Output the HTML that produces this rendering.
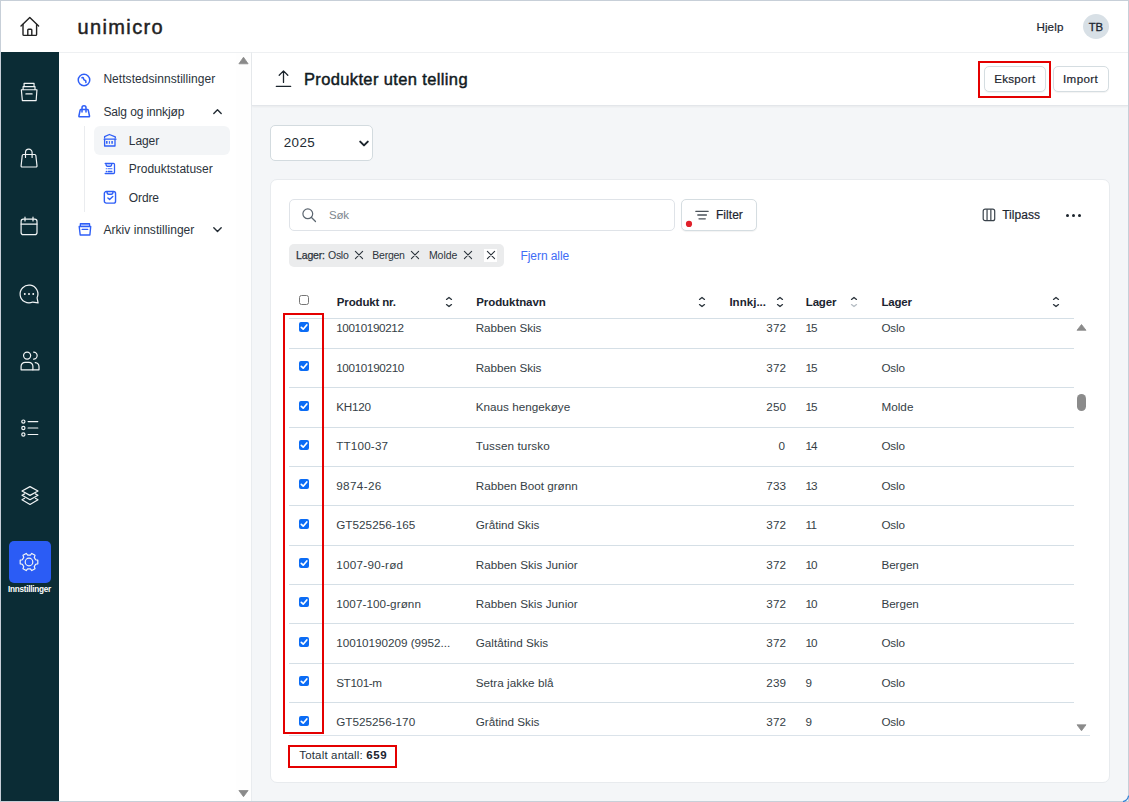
<!DOCTYPE html>
<html lang="nb">
<head>
<meta charset="utf-8">
<title>Produkter uten telling</title>
<style>
*{box-sizing:border-box;margin:0;padding:0}
html,body{width:1129px;height:802px;overflow:hidden;background:#fff}
body{font-family:"Liberation Sans",Arial,sans-serif;color:#1f2a33;font-size:12px;position:relative}
.abs{position:absolute}
#frame{position:absolute;left:0;top:0;width:1129px;height:802px;border:1px solid #c7cfd8;pointer-events:none;z-index:50}
#topbar{position:absolute;left:1px;top:1px;width:1127px;height:51px;background:#fff}
#rail{position:absolute;left:1px;top:52px;width:58px;height:749px;background:#0b2c35}
#side{position:absolute;left:59px;top:52px;width:192px;height:749px;background:#fff;border-top:1px solid #eef0f2}
#sidescroll{position:absolute;left:236px;top:53px;width:15px;height:748px;background:#fefefe}
#main{position:absolute;left:251px;top:52px;width:877px;height:749px;background:#f4f6f8;border-left:1px solid #e9ecef}
#phead{position:absolute;left:252px;top:52px;width:876px;height:54px;background:#fff;border-top:1px solid #eef0f2;border-bottom:1px solid #e3e6ea;box-shadow:0 1px 2px rgba(0,0,0,.05)}
.t{position:absolute;white-space:nowrap;line-height:1}
.ri{position:absolute;width:24px;height:24px;display:block;fill:none;stroke:#f1f4f5;stroke-width:1.2;stroke-linecap:round;stroke-linejoin:round}
.si{position:absolute;display:block;fill:none;stroke:#2f5ff7;stroke-width:1.4;stroke-linecap:round;stroke-linejoin:round}
.btn{position:absolute;background:#fff;border:1px solid #d5dde1;border-radius:5px;box-shadow:0 1px 1px rgba(0,0,0,.05)}
.red{position:absolute;border:2px solid #e40000;z-index:20}
#card{position:absolute;left:269.500px;top:179.400px;width:840.500px;height:603.400px;background:#fff;border:1px solid #e8ebee;border-radius:7px}
.row{position:absolute;left:289px;width:785px;height:1px;background:#d5dfe6}
.cb{position:absolute;left:299px;width:10px;height:10px;border-radius:2px;background:#0b6cf5}
.cb svg{position:absolute;left:0;top:0;width:10px;height:10px;fill:none;stroke:#fff;stroke-width:1.700;stroke-linecap:round;stroke-linejoin:round}
</style>
</head>
<body>
<div id="topbar"></div>
<div id="rail"></div>
<div id="side"></div>
<div id="sidescroll"></div>
<div id="main"></div>
<div id="phead"></div>
<div id="card"></div>

<!-- home icon -->
<svg class="abs" style="left:17.600px;top:15px;width:24px;height:24px" viewBox="0 0 24 24" fill="none" stroke="#222" stroke-width="1.400" stroke-linecap="round" stroke-linejoin="round"><path d="M3 11.100L11.800 2.400L20.600 11.100"/><path d="M5 9.400V19.400a1 1 0 0 0 1 1H17.600a1 1 0 0 0 1-1V9.400"/><path d="M9.800 20.300V15.100a.8.800 0 0 1 .8-.8h2.400a.8.800 0 0 1 .8.800V20.300"/></svg>
<!-- avatar -->
<div class="abs" style="left:1082.800px;top:13.800px;width:26.200px;height:25.200px;border-radius:50%;background:#d8e0e6"></div>

<svg class="ri" style="left:17.2px;top:80.3px" viewBox="0 0 24 24"><path d="M4.35 9.75H19.95L19.15 20.55H5.35Z"/><path d="M6.100 9.600V6.700H18V9.600"/><path d="M7.100 6.600V3.300H17.050V6.600"/><path d="M8.900 13.900H15.100"/></svg>
<svg class="ri" style="left:17.2px;top:146.3px" viewBox="0 0 24 24"><path d="M6.300 8.500H17.800Q18.700 8.500 18.850 9.500L20 19.800Q20.100 21 19 21H5.100Q4 21 4.100 19.800L5.250 9.500Q5.400 8.500 6.300 8.500Z"/><path d="M8.500 11.500V6.400A3.300 3.300 0 0 1 15.100 6.400V11.500"/></svg>
<svg class="ri" style="left:17.2px;top:214.3px" viewBox="0 0 24 24"><rect x="4.100" y="5.100" width="15.900" height="15.500" rx="2.200"/><path d="M4.100 10.100H20M8 3.200V7M16 3.200V7"/></svg>
<svg class="ri" style="left:17.0px;top:281.7px" viewBox="0 0 24 24"><path d="M20.070 15.760A8.900 8.900 0 1 0 15.760 20.070L21.100 20.900Z"/><circle cx="7.800" cy="12" r=".95" fill="#fff" stroke="none"/><circle cx="12" cy="12" r=".95" fill="#fff" stroke="none"/><circle cx="16.250" cy="12" r=".95" fill="#fff" stroke="none"/></svg>
<svg class="ri" style="left:17.5px;top:348.5px" viewBox="0 0 24 24"><circle cx="9.100" cy="6.600" r="3.550"/><path d="M15.600 3.050A3.550 3.550 0 0 1 15.600 10.150"/><path d="M3.100 20.800V17.300A4 4 0 0 1 7.100 13.300H10.900A4 4 0 0 1 14.900 17.300V20.800Z"/><path d="M17.200 13.600A4.200 4.200 0 0 1 21 17.700V20.800H14.900"/></svg>
<svg class="ri" style="left:17.6px;top:415.9px" viewBox="0 0 24 24"><circle cx="5.360" cy="5.600" r="1.600"/><circle cx="5.360" cy="12" r="1.600"/><circle cx="5.360" cy="18.500" r="1.600"/><path d="M10.100 5.600H19.800M10.100 12H19.800M10.100 18.500H19.800"/></svg>
<svg class="ri" style="left:17.8px;top:482.8px" viewBox="0 0 24 24"><path d="M12 3.600L20 8L12 12.400L4 8Z"/><path d="M6.600 10.900L4 12.300L12 16.700L20 12.300L17.400 10.900"/><path d="M6.600 15.300L4 16.700L12 21.400L20 16.700L17.400 15.300"/></svg>
<div class="abs" style="left:9px;top:540.800px;width:42.200px;height:42.100px;border-radius:5px;background:#2b5cf5"></div>
<svg class="ri" style="left:17.2px;top:550.4px" viewBox="0 0 24 24"><circle cx="12" cy="12" r="3.800"/><path d="M18.62 9.72L20.80 10.13L20.80 13.87L18.62 14.28L17.28 16.59L18.02 18.69L14.78 20.56L13.34 18.87L10.66 18.87L9.22 20.56L5.98 18.69L6.72 16.59L5.38 14.28L3.20 13.87L3.20 10.13L5.38 9.72L6.72 7.41L5.98 5.31L9.22 3.44L10.66 5.13L13.34 5.13L14.78 3.44L18.02 5.31L17.28 7.41Z"/></svg>

<!-- side scroll arrows -->
<svg class="abs" style="left:238px;top:56px;width:11px;height:9px" viewBox="0 0 11 9"><path d="M5.500 1.200L10.100 7.800H.9z" fill="#8a8a8a" stroke="#8a8a8a" stroke-width=".8" stroke-linejoin="round"/></svg>
<svg class="abs" style="left:238px;top:789px;width:11px;height:9px" viewBox="0 0 11 9"><path d="M5.500 7.700L10.100 1.500H.9z" fill="#8a8a8a" stroke="#8a8a8a" stroke-width=".8" stroke-linejoin="round"/></svg>

<!-- side menu -->
<div class="abs" style="left:94px;top:126px;width:136px;height:29px;border-radius:6px;background:#f3f5f7"></div>
<div class="abs" style="left:84px;top:126px;width:1px;height:86px;background:#eaecef"></div>
<!-- globe -->
<svg class="si" style="left:77.100px;top:72.900px;width:14px;height:14px;stroke-width:1.500" viewBox="0 0 14 14"><circle cx="7" cy="7" r="5.750"/><path d="M5 4.700Q6.300 4.200 6.500 5.600Q6.700 7 7.900 7.300Q9.200 7.700 8.900 9.400" stroke-width="1.600"/></svg>
<!-- bag -->
<svg class="si" style="left:77.100px;top:104px;width:14px;height:14px;stroke-width:1.500" viewBox="0 0 14 14"><path d="M3.900 5.600H10.500Q11.100 5.600 11.250 6.200L12.500 12Q12.650 12.800 11.900 12.800H2.500Q1.750 12.800 1.900 12L3.150 6.200Q3.300 5.600 3.900 5.600Z"/><path d="M5 8V3.700A2 2 0 0 1 9 3.700V8"/></svg>
<!-- chevrons -->
<svg class="abs" style="left:211.500px;top:106.500px;width:11px;height:9px" viewBox="0 0 11 9" fill="none" stroke="#222b33" stroke-width="1.400" stroke-linecap="round" stroke-linejoin="round"><path d="M1.800 6.500l3.700-3.700 3.700 3.700"/></svg>
<svg class="abs" style="left:211.500px;top:225px;width:11px;height:9px" viewBox="0 0 11 9" fill="none" stroke="#222b33" stroke-width="1.400" stroke-linecap="round" stroke-linejoin="round"><path d="M1.800 2.700l3.700 3.700 3.700-3.700"/></svg>
<!-- lager icon (warehouse) -->
<svg class="si" style="left:103px;top:133px;width:14px;height:14px;stroke-width:1.300" viewBox="0 0 14 14"><path d="M1.600 4.800V3.700L6.400 1.500L12.300 3.900V4.800"/><path d="M1.200 6.200H13"/><path d="M1.600 6.200V13H12V6.200"/><path d="M3.800 8.100V10.800M9.100 8.100V10.800" stroke-width="1.500" stroke-linecap="butt"/><path d="M6.400 8.100V10.800" stroke-width="1" stroke-linecap="butt"/></svg>
<!-- produktstatuser icon -->
<svg class="si" style="left:103px;top:162px;width:14px;height:14px;stroke-width:1.300" viewBox="0 0 14 14"><path d="M2.200 1.400H10.500Q11.500 1.400 11.500 2.400V10.500Q11.500 11.500 10.500 11.500H2.200"/><path d="M2.900 1.600Q3.200 4.300 4.500 4.300H7.200Q8.500 4.300 8.800 1.600"/><path d="M4.600 2.800H7.200" opacity=".5"/><path d="M3.300 6.700h.3M5.200 6.700H8.900" opacity=".7"/><path d="M3.300 9.500h.3M5.200 9.500H8.900"/></svg>
<!-- ordre icon -->
<svg class="si" style="left:102.500px;top:190px;width:14px;height:14px;stroke-width:1.400" viewBox="0 0 14 14"><rect x="1.350" y="1.550" width="11.200" height="11.600" rx="2"/><path d="M3.900 1.700Q4.200 4.300 5.600 4.300H8.400Q9.800 4.300 10.100 1.700"/><path d="M4.900 7.900L6.600 9.400L9.800 6.500"/></svg>
<!-- arkiv icon -->
<svg class="si" style="left:77.500px;top:222px;width:14px;height:14px;stroke-width:1.400" viewBox="0 0 14 14"><path d="M2.400 4.400V1.700H11.500V4.400"/><path d="M3.900 2.900H10" opacity=".5"/><path d="M1.200 4.500H12.700L11.900 13H2.200Z"/><path d="M4.200 7.400H9.700"/></svg>

<!-- page header upload icon -->
<svg class="abs" style="left:275px;top:68.500px;width:17px;height:19px" viewBox="0 0 17 19" fill="none" stroke="#1b242c" stroke-width="1.300" stroke-linecap="round" stroke-linejoin="round"><path d="M8.500 13.400V2M4.200 6.200L8.500 1.900l4.300 4.300M1.300 17.300h14.400"/></svg>
<!-- header buttons -->
<div class="btn" style="left:984px;top:66px;width:62px;height:26px"></div>
<div class="btn" style="left:1053px;top:66px;width:56px;height:26px"></div>
<div class="red" style="left:978px;top:61px;width:73px;height:37px"></div>

<!-- year select -->
<div class="btn" style="left:270px;top:125px;width:103px;height:36px;border-color:#d3dbdf;box-shadow:none"></div>
<svg class="abs" style="left:357.500px;top:139px;width:12px;height:9px" viewBox="0 0 12 9" fill="none" stroke="#1b242c" stroke-width="2" stroke-linecap="round" stroke-linejoin="round"><path d="M2.200 2.600L6 6.400l3.800-3.800"/></svg>

<!-- search -->
<div class="btn" style="left:289px;top:199px;width:386px;height:32px;border-color:#dfe3e8;box-shadow:none"></div>
<svg class="abs" style="left:301px;top:207px;width:16px;height:16px" viewBox="0 0 16 16" fill="none" stroke="#5c6670" stroke-width="1.200" stroke-linecap="round"><circle cx="6.800" cy="6.800" r="4.900"/><path d="M10.500 10.500l4 4"/></svg>
<!-- filter button -->
<div class="btn" style="left:681px;top:199px;width:76px;height:32px"></div>
<svg class="abs" style="left:694px;top:208px;width:16px;height:14px" viewBox="0 0 16 14" fill="none" stroke="#4a525a" stroke-width="1.300" stroke-linecap="round"><path d="M1.800 3.300H14.200M3.800 7H12.400M5 10.800H11.300"/></svg>
<svg class="abs" style="left:685px;top:220px;width:8px;height:8px" viewBox="0 0 8 8"><circle cx="4" cy="3.900" r="3.100" fill="#e0202a"/></svg>
<!-- tilpass -->
<svg class="abs" style="left:982.300px;top:208.400px;width:14px;height:14px" viewBox="0 0 14 14" fill="none" stroke="#3a434b" stroke-width="1.200" stroke-linejoin="round"><rect x="1.200" y="1.200" width="11.500" height="11.500" rx="2"/><path d="M5.050 1.200v11.500M8.850 1.200v11.500"/></svg>
<div class="abs" style="left:1066px;top:213.600px;width:3.300px;height:3.300px;border-radius:50%;background:#1b242c"></div>
<div class="abs" style="left:1071.900px;top:213.600px;width:3.300px;height:3.300px;border-radius:50%;background:#1b242c"></div>
<div class="abs" style="left:1077.800px;top:213.600px;width:3.300px;height:3.300px;border-radius:50%;background:#1b242c"></div>

<!-- chips -->
<div class="abs" style="left:289.300px;top:243.800px;width:214.700px;height:23.100px;border-radius:5px;background:#ebeced"></div>
<div class="abs" style="left:484.100px;top:248.800px;width:13.300px;height:12.800px;background:#fff"></div>
<svg class="abs" style="left:352.7px;top:249.0px;width:12px;height:12px" viewBox="0 0 12 12" fill="none" stroke="#2b333b" stroke-width="1.100" stroke-linecap="round"><path d="M2.4 2.4L9.6 9.6M9.6 2.4L2.4 9.6"/></svg>
<svg class="abs" style="left:408.7px;top:249.0px;width:12px;height:12px" viewBox="0 0 12 12" fill="none" stroke="#2b333b" stroke-width="1.100" stroke-linecap="round"><path d="M2.4 2.4L9.6 9.6M9.6 2.4L2.4 9.6"/></svg>
<svg class="abs" style="left:461.9px;top:249.0px;width:12px;height:12px" viewBox="0 0 12 12" fill="none" stroke="#2b333b" stroke-width="1.100" stroke-linecap="round"><path d="M2.4 2.4L9.6 9.6M9.6 2.4L2.4 9.6"/></svg>
<svg class="abs" style="left:484.7px;top:249.0px;width:12px;height:12px" viewBox="0 0 12 12" fill="none" stroke="#2b333b" stroke-width="1.100" stroke-linecap="round"><path d="M2.4 2.4L9.6 9.6M9.6 2.4L2.4 9.6"/></svg>

<!-- table header -->
<div class="abs" style="left:299px;top:295px;width:10px;height:10px;border:1px solid #767676;border-radius:2.500px;background:#fff"></div>
<svg class="abs" style="left:444.6px;top:294.9px;width:8px;height:14px" viewBox="0 0 8 14" fill="none" stroke-width="1.300" stroke-linecap="round" stroke-linejoin="round"><path d="M1.500 4.400L4 2.400L6.500 4.400" stroke="#2a333b"/><path d="M1.500 9.600L4 11.600L6.500 9.600" stroke="#2a333b"/></svg>
<svg class="abs" style="left:697.5px;top:294.9px;width:8px;height:14px" viewBox="0 0 8 14" fill="none" stroke-width="1.300" stroke-linecap="round" stroke-linejoin="round"><path d="M1.500 4.400L4 2.400L6.500 4.400" stroke="#2a333b"/><path d="M1.500 9.600L4 11.600L6.500 9.600" stroke="#2a333b"/></svg>
<svg class="abs" style="left:776.3px;top:294.9px;width:8px;height:14px" viewBox="0 0 8 14" fill="none" stroke-width="1.300" stroke-linecap="round" stroke-linejoin="round"><path d="M1.500 4.400L4 2.400L6.500 4.400" stroke="#2a333b"/><path d="M1.500 9.600L4 11.600L6.500 9.600" stroke="#2a333b"/></svg>
<svg class="abs" style="left:849.5px;top:294.9px;width:8px;height:14px" viewBox="0 0 8 14" fill="none" stroke-width="1.300" stroke-linecap="round" stroke-linejoin="round"><path d="M1.500 4.400L4 2.400L6.500 4.400" stroke="#2a333b"/><path d="M1.500 9.600L4 11.600L6.500 9.600" stroke="#b5bcc3"/></svg>
<svg class="abs" style="left:1052.4px;top:294.9px;width:8px;height:14px" viewBox="0 0 8 14" fill="none" stroke-width="1.300" stroke-linecap="round" stroke-linejoin="round"><path d="M1.500 4.400L4 2.400L6.500 4.400" stroke="#2a333b"/><path d="M1.500 9.600L4 11.600L6.500 9.600" stroke="#2a333b"/></svg>
<div class="row" style="top:317.800px"></div>
<div class="row" style="top:347.9px"></div>
<div class="row" style="top:387.3px"></div>
<div class="row" style="top:426.6px"></div>
<div class="row" style="top:466.0px"></div>
<div class="row" style="top:505.3px"></div>
<div class="row" style="top:544.7px"></div>
<div class="row" style="top:584.1px"></div>
<div class="row" style="top:623.4px"></div>
<div class="row" style="top:662.8px"></div>
<div class="row" style="top:702.1px"></div>
<div class="cb" style="top:321.9px"><svg viewBox="0 0 10 10"><path d="M2.300 5.300l1.900 1.900 3.600-4.200"/></svg></div>
<div class="cb" style="top:361.3px"><svg viewBox="0 0 10 10"><path d="M2.300 5.300l1.900 1.900 3.600-4.200"/></svg></div>
<div class="cb" style="top:400.6px"><svg viewBox="0 0 10 10"><path d="M2.300 5.300l1.900 1.900 3.600-4.200"/></svg></div>
<div class="cb" style="top:440.0px"><svg viewBox="0 0 10 10"><path d="M2.300 5.300l1.900 1.900 3.600-4.200"/></svg></div>
<div class="cb" style="top:479.3px"><svg viewBox="0 0 10 10"><path d="M2.300 5.300l1.900 1.900 3.600-4.200"/></svg></div>
<div class="cb" style="top:518.7px"><svg viewBox="0 0 10 10"><path d="M2.300 5.300l1.900 1.900 3.600-4.200"/></svg></div>
<div class="cb" style="top:558.1px"><svg viewBox="0 0 10 10"><path d="M2.300 5.300l1.900 1.900 3.600-4.200"/></svg></div>
<div class="cb" style="top:597.4px"><svg viewBox="0 0 10 10"><path d="M2.300 5.300l1.900 1.900 3.600-4.200"/></svg></div>
<div class="cb" style="top:636.8px"><svg viewBox="0 0 10 10"><path d="M2.300 5.300l1.900 1.900 3.600-4.200"/></svg></div>
<div class="cb" style="top:676.1px"><svg viewBox="0 0 10 10"><path d="M2.300 5.300l1.900 1.900 3.600-4.200"/></svg></div>
<div class="cb" style="top:715.5px"><svg viewBox="0 0 10 10"><path d="M2.300 5.300l1.900 1.900 3.600-4.200"/></svg></div>
<div class="row" style="top:735px;width:801px;background:#dbe3ea"></div>
<!-- table scrollbar -->
<svg class="abs" style="left:1076.200px;top:323.400px;width:11px;height:9px" viewBox="0 0 11 9"><path d="M5.500 1.500L10 7.300H1z" fill="#8a8a8a" stroke="#8a8a8a" stroke-width=".8" stroke-linejoin="round"/></svg>
<svg class="abs" style="left:1076.300px;top:722.600px;width:11px;height:9px" viewBox="0 0 11 9"><path d="M5.500 7.800L10 1.800H1z" fill="#8a8a8a" stroke="#8a8a8a" stroke-width=".8" stroke-linejoin="round"/></svg>
<div class="abs" style="left:1077.100px;top:394.100px;width:9px;height:16.800px;border-radius:4.500px;background:#8b8b8b"></div>

<!-- red annotation boxes -->
<div class="red" style="left:283px;top:313.200px;width:41px;height:421px"></div>
<div class="red" style="left:288.100px;top:745px;width:108.800px;height:23px"></div>

<div class="t" style="left:77.5px;top:17.1px;font-size:20px;letter-spacing:1.38px;color:#222;-webkit-text-stroke:0.45px #222;">unimicro</div>
<div class="t" style="left:1036.4px;top:21.3px;font-size:11.6px;letter-spacing:0.13px;color:#1d2630;-webkit-text-stroke:0.2px #1d2630;">Hjelp</div>
<div class="t" style="left:1088.8px;top:21.6px;font-size:11.3px;letter-spacing:-0.09px;color:#1d2630;-webkit-text-stroke:0.3px #1d2630;">TB</div>
<div class="t" style="left:7.9px;top:586.3px;font-size:8.2px;letter-spacing:-0.26px;color:#fff;font-weight:bold;">Innstillinger</div>
<div class="t" style="left:103.4px;top:73.2px;font-size:12px;letter-spacing:0.05px;color:#2b333b;">Nettstedsinnstillinger</div>
<div class="t" style="left:103.4px;top:105.6px;font-size:12px;letter-spacing:-0.12px;color:#2b333b;">Salg og innkjøp</div>
<div class="t" style="left:128.8px;top:134.5px;font-size:12px;letter-spacing:-0.08px;color:#2b333b;">Lager</div>
<div class="t" style="left:128.8px;top:163.4px;font-size:12px;letter-spacing:-0.01px;color:#2b333b;">Produktstatuser</div>
<div class="t" style="left:128.8px;top:192.2px;font-size:12px;letter-spacing:-0.12px;color:#2b333b;">Ordre</div>
<div class="t" style="left:103.4px;top:224.4px;font-size:12px;letter-spacing:0.05px;color:#2b333b;">Arkiv innstillinger</div>
<div class="t" style="left:303.9px;top:70.8px;font-size:16.5px;letter-spacing:0.37px;color:#111a22;-webkit-text-stroke:0.45px #111a22;">Produkter uten telling</div>
<div class="t" style="left:994.2px;top:72.9px;font-size:11.6px;letter-spacing:0.27px;color:#1d2630;-webkit-text-stroke:0.2px #1d2630;">Eksport</div>
<div class="t" style="left:1063.0px;top:72.9px;font-size:11.6px;letter-spacing:0.39px;color:#1d2630;-webkit-text-stroke:0.2px #1d2630;">Import</div>
<div class="t" style="left:283.7px;top:135.7px;font-size:13.4px;letter-spacing:0.42px;color:#222b33;">2025</div>
<div class="t" style="left:328.9px;top:209.7px;font-size:11.5px;letter-spacing:-0.13px;color:#7d868e;">Søk</div>
<div class="t" style="left:716.0px;top:209.1px;font-size:12px;letter-spacing:0.04px;color:#1d2630;-webkit-text-stroke:0.2px #1d2630;">Filter</div>
<div class="t" style="left:1002.2px;top:209.1px;font-size:12px;letter-spacing:0.05px;color:#1d2630;-webkit-text-stroke:0.2px #1d2630;">Tilpass</div>
<div class="t" style="left:296.1px;top:250.2px;font-size:10.5px;letter-spacing:-0.19px;color:#2b333b;-webkit-text-stroke:0.25px #2b333b;">Lager:</div>
<div class="t" style="left:328.0px;top:250.2px;font-size:10.5px;letter-spacing:-0.29px;color:#2b333b;">Oslo</div>
<div class="t" style="left:372.3px;top:250.2px;font-size:10.5px;letter-spacing:-0.24px;color:#2b333b;">Bergen</div>
<div class="t" style="left:428.9px;top:250.2px;font-size:10.5px;letter-spacing:-0.02px;color:#2b333b;">Molde</div>
<div class="t" style="left:520.5px;top:249.7px;font-size:12px;letter-spacing:-0.07px;color:#3f6df6;">Fjern alle</div>
<div class="t" style="left:336.8px;top:296.8px;font-size:11.5px;letter-spacing:-0.15px;color:#1b2430;font-weight:bold;">Produkt nr.</div>
<div class="t" style="left:476.2px;top:296.8px;font-size:11.5px;letter-spacing:-0.07px;color:#1b2430;font-weight:bold;">Produktnavn</div>
<div class="t" style="left:729.4px;top:296.8px;font-size:11.5px;letter-spacing:0.03px;color:#1b2430;font-weight:bold;">Innkj...</div>
<div class="t" style="left:805.8px;top:296.8px;font-size:11.5px;letter-spacing:-0.19px;color:#1b2430;font-weight:bold;">Lager</div>
<div class="t" style="left:881.4px;top:296.8px;font-size:11.5px;letter-spacing:-0.19px;color:#1b2430;font-weight:bold;">Lager</div>
<div class="t" style="left:336.2px;top:322.3px;font-size:11.7px;letter-spacing:-0.37px;color:#353e46;">10010190212</div>
<div class="t" style="left:475.7px;top:322.3px;font-size:11.7px;letter-spacing:-0.06px;color:#353e46;">Rabben Skis</div>
<div class="t" style="right:342.8px;top:322.3px;font-size:11.7px;letter-spacing:0.12px;color:#353e46;">372</div>
<div class="t" style="left:805.4px;top:322.3px;font-size:11.7px;letter-spacing:-0.9px;color:#353e46;">15</div>
<div class="t" style="left:881.4px;top:322.3px;font-size:11.7px;letter-spacing:-0.12px;color:#353e46;">Oslo</div>
<div class="t" style="left:336.2px;top:361.7px;font-size:11.7px;letter-spacing:-0.34px;color:#353e46;">10010190210</div>
<div class="t" style="left:475.7px;top:361.7px;font-size:11.7px;letter-spacing:-0.06px;color:#353e46;">Rabben Skis</div>
<div class="t" style="right:342.8px;top:361.7px;font-size:11.7px;letter-spacing:0.12px;color:#353e46;">372</div>
<div class="t" style="left:805.4px;top:361.7px;font-size:11.7px;letter-spacing:-0.9px;color:#353e46;">15</div>
<div class="t" style="left:881.4px;top:361.7px;font-size:11.7px;letter-spacing:-0.12px;color:#353e46;">Oslo</div>
<div class="t" style="left:336.2px;top:401.0px;font-size:11.7px;letter-spacing:-0.23px;color:#353e46;">KH120</div>
<div class="t" style="left:475.7px;top:401.0px;font-size:11.7px;letter-spacing:0.02px;color:#353e46;">Knaus hengekøye</div>
<div class="t" style="right:342.8px;top:401.0px;font-size:11.7px;letter-spacing:0.12px;color:#353e46;">250</div>
<div class="t" style="left:805.4px;top:401.0px;font-size:11.7px;letter-spacing:-0.9px;color:#353e46;">15</div>
<div class="t" style="left:881.4px;top:401.0px;font-size:11.7px;letter-spacing:0.05px;color:#353e46;">Molde</div>
<div class="t" style="left:336.2px;top:440.4px;font-size:11.7px;letter-spacing:0.18px;color:#353e46;">TT100-37</div>
<div class="t" style="left:475.7px;top:440.4px;font-size:11.7px;letter-spacing:0.09px;color:#353e46;">Tussen tursko</div>
<div class="t" style="right:343.3px;top:440.4px;font-size:11.7px;letter-spacing:0.67px;color:#353e46;">0</div>
<div class="t" style="left:805.4px;top:440.4px;font-size:11.7px;letter-spacing:-0.82px;color:#353e46;">14</div>
<div class="t" style="left:881.4px;top:440.4px;font-size:11.7px;letter-spacing:-0.12px;color:#353e46;">Oslo</div>
<div class="t" style="left:336.2px;top:479.8px;font-size:11.7px;letter-spacing:0.38px;color:#353e46;">9874-26</div>
<div class="t" style="left:475.7px;top:479.8px;font-size:11.7px;letter-spacing:0.0px;color:#353e46;">Rabben Boot grønn</div>
<div class="t" style="right:342.8px;top:479.8px;font-size:11.7px;letter-spacing:0.12px;color:#353e46;">733</div>
<div class="t" style="left:805.4px;top:479.8px;font-size:11.7px;letter-spacing:-0.9px;color:#353e46;">13</div>
<div class="t" style="left:881.4px;top:479.8px;font-size:11.7px;letter-spacing:-0.12px;color:#353e46;">Oslo</div>
<div class="t" style="left:336.2px;top:519.1px;font-size:11.7px;letter-spacing:0.05px;color:#353e46;">GT525256-165</div>
<div class="t" style="left:475.7px;top:519.1px;font-size:11.7px;letter-spacing:0.0px;color:#353e46;">Gråtind Skis</div>
<div class="t" style="right:342.8px;top:519.1px;font-size:11.7px;letter-spacing:0.12px;color:#353e46;">372</div>
<div class="t" style="left:805.4px;top:519.1px;font-size:11.7px;letter-spacing:-0.48px;color:#353e46;">11</div>
<div class="t" style="left:881.4px;top:519.1px;font-size:11.7px;letter-spacing:-0.12px;color:#353e46;">Oslo</div>
<div class="t" style="left:336.2px;top:558.5px;font-size:11.7px;letter-spacing:0.26px;color:#353e46;">1007-90-rød</div>
<div class="t" style="left:475.7px;top:558.5px;font-size:11.7px;letter-spacing:0.04px;color:#353e46;">Rabben Skis Junior</div>
<div class="t" style="right:342.8px;top:558.5px;font-size:11.7px;letter-spacing:0.12px;color:#353e46;">372</div>
<div class="t" style="left:805.4px;top:558.5px;font-size:11.7px;letter-spacing:-0.9px;color:#353e46;">10</div>
<div class="t" style="left:881.4px;top:558.5px;font-size:11.7px;letter-spacing:-0.05px;color:#353e46;">Bergen</div>
<div class="t" style="left:336.2px;top:597.8px;font-size:11.7px;letter-spacing:0.07px;color:#353e46;">1007-100-grønn</div>
<div class="t" style="left:475.7px;top:597.8px;font-size:11.7px;letter-spacing:0.04px;color:#353e46;">Rabben Skis Junior</div>
<div class="t" style="right:342.8px;top:597.8px;font-size:11.7px;letter-spacing:0.12px;color:#353e46;">372</div>
<div class="t" style="left:805.4px;top:597.8px;font-size:11.7px;letter-spacing:-0.9px;color:#353e46;">10</div>
<div class="t" style="left:881.4px;top:597.8px;font-size:11.7px;letter-spacing:-0.05px;color:#353e46;">Bergen</div>
<div class="t" style="left:336.2px;top:637.2px;font-size:11.7px;letter-spacing:-0.02px;color:#353e46;">10010190209 (9952...</div>
<div class="t" style="left:475.7px;top:637.2px;font-size:11.7px;letter-spacing:0.03px;color:#353e46;">Galtåtind Skis</div>
<div class="t" style="right:342.8px;top:637.2px;font-size:11.7px;letter-spacing:0.12px;color:#353e46;">372</div>
<div class="t" style="left:805.4px;top:637.2px;font-size:11.7px;letter-spacing:-0.9px;color:#353e46;">10</div>
<div class="t" style="left:881.4px;top:637.2px;font-size:11.7px;letter-spacing:-0.12px;color:#353e46;">Oslo</div>
<div class="t" style="left:336.2px;top:676.6px;font-size:11.7px;letter-spacing:-0.36px;color:#353e46;">ST101-m</div>
<div class="t" style="left:475.7px;top:676.6px;font-size:11.7px;letter-spacing:0.04px;color:#353e46;">Setra jakke blå</div>
<div class="t" style="right:342.8px;top:676.6px;font-size:11.7px;letter-spacing:0.12px;color:#353e46;">239</div>
<div class="t" style="left:805.4px;top:676.6px;font-size:11.7px;letter-spacing:0.67px;color:#353e46;">9</div>
<div class="t" style="left:881.4px;top:676.6px;font-size:11.7px;letter-spacing:-0.12px;color:#353e46;">Oslo</div>
<div class="t" style="left:336.2px;top:715.9px;font-size:11.7px;letter-spacing:0.03px;color:#353e46;">GT525256-170</div>
<div class="t" style="left:475.7px;top:715.9px;font-size:11.7px;letter-spacing:0.0px;color:#353e46;">Gråtind Skis</div>
<div class="t" style="right:342.8px;top:715.9px;font-size:11.7px;letter-spacing:0.12px;color:#353e46;">372</div>
<div class="t" style="left:805.4px;top:715.9px;font-size:11.7px;letter-spacing:0.67px;color:#353e46;">9</div>
<div class="t" style="left:881.4px;top:715.9px;font-size:11.7px;letter-spacing:-0.12px;color:#353e46;">Oslo</div>
<div class="t" style="left:299.3px;top:750.2px;font-size:11.5px;letter-spacing:0.16px;color:#27313a;">Totalt antall:</div>
<div class="t" style="left:366.3px;top:750.2px;font-size:11.5px;letter-spacing:0.63px;color:#1b2430;font-weight:bold;">659</div>

<!-- bottom-right resize corner -->
<svg class="abs" style="left:1120px;top:793px;width:9px;height:9px;z-index:60" viewBox="0 0 9 9" fill="none" stroke="#2f7fd6" stroke-width="1.200"><path d="M3 8.600Q7.600 7.600 8.600 2.600"/></svg>
<div id="frame"></div>
</body>
</html>
